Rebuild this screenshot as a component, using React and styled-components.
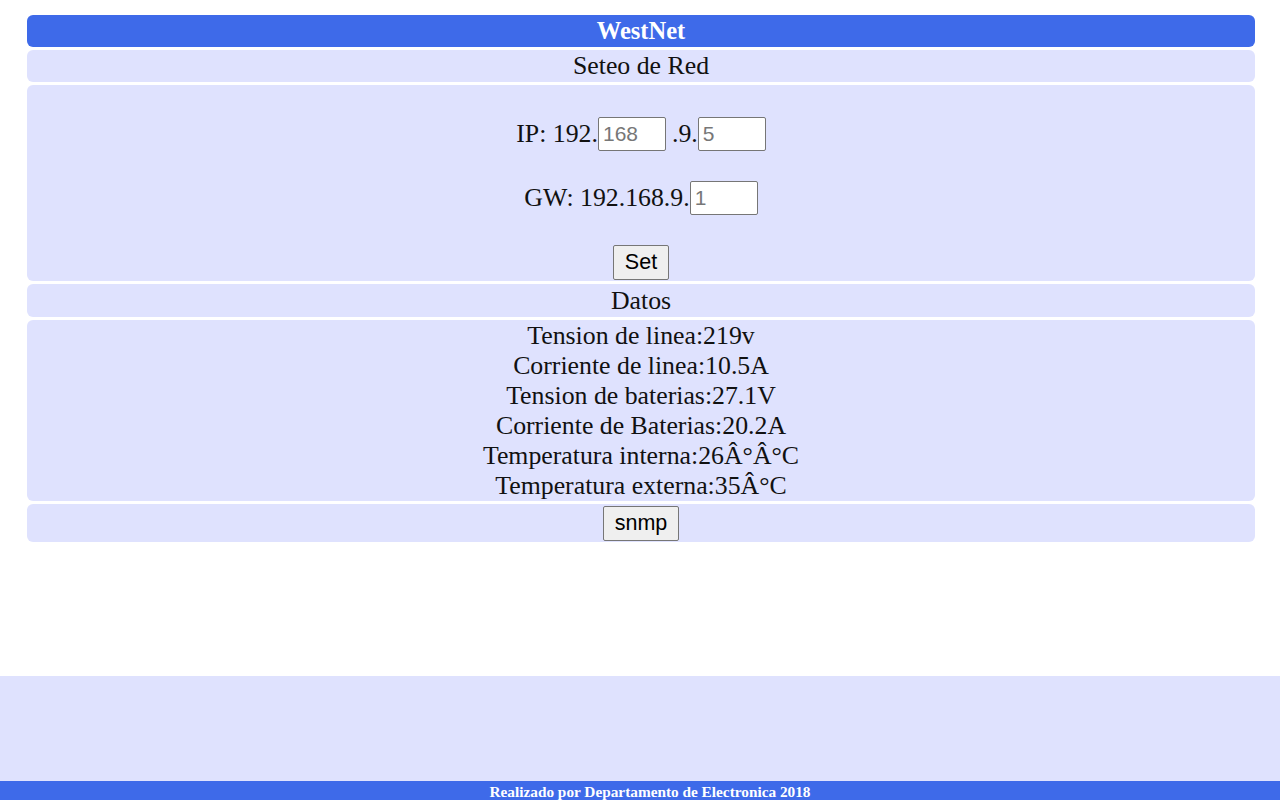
import React from 'react';
import styled, { createGlobalStyle } from 'styled-components';

const GlobalStyle = createGlobalStyle`
  html, body {
    margin: 0;
    padding: 0;
    background: #ffffff;
  }
  body {
    font-family: "Liberation Serif", "Times New Roman", serif;
    color: #111;
  }
`;

const Page = styled.div`
  display: flex;
  flex-direction: column;
  min-height: 800px;
`;

const Main = styled.div`
  display: flex;
  flex-direction: column;
  gap: 3px;
  margin: 15px 25px 0 27px;
`;

const Row = styled.div`
  background: ${p => (p.$blue ? '#3e6ae9' : '#dfe2fe')};
  color: ${p => (p.$blue ? '#ffffff' : '#111')};
  font-weight: ${p => (p.$blue ? 'bold' : 'normal')};
  border-radius: 6px;
  min-height: ${p => p.$h || 32}px;
  font-size: ${p => (p.$blue ? 24.5 : 25.8)}px;
  line-height: ${p => p.$lh || 32}px;
  text-align: center;
  display: flex;
  flex-direction: column;
  align-items: center;
  justify-content: ${p => p.$justify || 'center'};
  padding: ${p => p.$pad || '0'};
  box-sizing: border-box;
`;

const FormLine = styled.div`
  display: flex;
  align-items: center;
  justify-content: center;
  height: 34px;
  margin-top: ${p => p.$top || 0}px;
`;

const Field = styled.input`
  width: 68px;
  height: 34px;
  box-sizing: border-box;
  border: 1px solid #767676;
  border-radius: 2px;
  background: #fff;
  font-family: "Liberation Sans", Arial, sans-serif;
  font-size: 21px;
  padding: 1px 4px;
  margin: 0 ${p => p.$mr || 0}px 0 0;
  &::placeholder {
    color: #777;
  }
`;

const Button = styled.button`
  font-family: "Liberation Sans", Arial, sans-serif;
  font-size: 21.5px;
  height: 35px;
  padding: 0 11px;
  background: #efefef;
  border: 1px solid #767676;
  border-radius: 2px;
  color: #000;
`;

const Spacer = styled.div`
  flex: 1;
`;

const FooterBand = styled.div`
  background: #dfe2fe;
  height: 105px;
`;

const FooterBar = styled.div`
  background: #3e6ae9;
  color: #fff;
  font-weight: bold;
  font-size: 15.3px;
  height: 19px;
  line-height: 21px;
  text-align: center;
  padding-left: 20px;
`;

const readings = [
  'Tension de linea:219v',
  'Corriente de linea:10.5A',
  'Tension de baterias:27.1V',
  'Corriente de Baterias:20.2A',
  'Temperatura interna:26Â°Â°C',
  'Temperatura externa:35Â°C',
];

const App = () => {
  return (
    <Page>
      <GlobalStyle />
      <Main>
        <Row $blue $h={32}>WestNet</Row>
        <Row $h={32}>Seteo de Red</Row>
        <Row $h={196} $justify="flex-start" $pad="32px 0 0 0">
          <FormLine>
            IP: 192.<Field placeholder="168" $mr={6} />.9.<Field placeholder="5" />
          </FormLine>
          <FormLine $top={30}>
            GW: 192.168.9.<Field placeholder="1" />
          </FormLine>
          <FormLine $top={30}>
            <Button>Set</Button>
          </FormLine>
        </Row>
        <Row $h={33}>Datos</Row>
        <Row $h={181} $lh={30}>
          {readings.map(r => (
            <div key={r}>{r}</div>
          ))}
        </Row>
        <Row $h={38}>
          <Button>snmp</Button>
        </Row>
      </Main>
      <Spacer />
      <FooterBand />
      <FooterBar>Realizado por Departamento de Electronica 2018</FooterBar>
    </Page>
  );
};

export default App;
